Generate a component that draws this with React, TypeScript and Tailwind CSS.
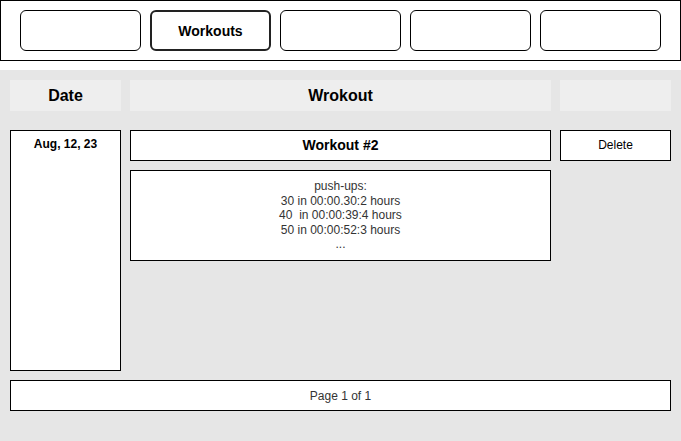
const font = { fontFamily: '"Liberation Sans", Arial, sans-serif' };

const tabs = ["", "Workouts", "", "", ""];

const sets = ["30 in 00:00.30:2 hours", "40  in 00:00:39:4 hours", "50 in 00:00:52:3 hours", "..."];

export default function App() {
  return (
    <div className="w-[681px] h-[441px] bg-white text-black" style={font}>
      <nav className="flex h-[61px] items-center gap-[9px] border border-black pl-[19px]">
        {tabs.map((label, i) => (
          <div
            key={i}
            className={
              i === 1
                ? "flex h-[41px] w-[121px] items-center justify-center rounded-[6px] border-2 border-[#222] pt-[2px] text-[14px] font-bold"
                : "flex h-[41px] w-[121px] items-center justify-center rounded-[6px] border border-black"
            }
          >
            {label}
          </div>
        ))}
      </nav>

      <section className="mt-[9px] h-[371px] w-[681px] bg-[#e6e6e6] px-[10px] pt-[10px]">
        <div className="grid grid-cols-[111px_421px_111px] gap-x-[9px]">
          <div className="flex h-[31px] items-center justify-center bg-[#eeeeee] text-[16px] font-bold">Date</div>
          <div className="flex h-[31px] items-center justify-center bg-[#eeeeee] text-[16px] font-bold">Wrokout</div>
          <div className="h-[31px] bg-[#eeeeee]" />
        </div>

        <div className="mt-[19px] grid grid-cols-[111px_421px_111px] gap-x-[9px]">
          <div className="h-[241px] border border-black bg-white pt-[4px] text-center text-[12px] font-bold">
            Aug, 12, 23
          </div>
          <div className="flex flex-col gap-[9px]">
            <div className="flex h-[31px] items-center justify-center border border-black bg-white text-[14px] font-bold">
              Workout #2
            </div>
            <div className="flex h-[91px] flex-col items-center border border-black bg-white pt-[8px] text-[12px] leading-[14.5px] text-[#333]">
              <span>push-ups:</span>
              {sets.map((s) => (
                <span key={s} className="whitespace-pre">{s}</span>
              ))}
            </div>
          </div>
          <div className="flex h-[31px] items-center justify-center border border-black bg-white pb-[2px] text-[12px]">
            Delete
          </div>
        </div>

        <div className="mt-[9px] flex h-[31px] w-[661px] items-center justify-center border border-black bg-white text-[12px] text-[#333]">
          Page 1 of 1
        </div>
      </section>
    </div>
  );
}
